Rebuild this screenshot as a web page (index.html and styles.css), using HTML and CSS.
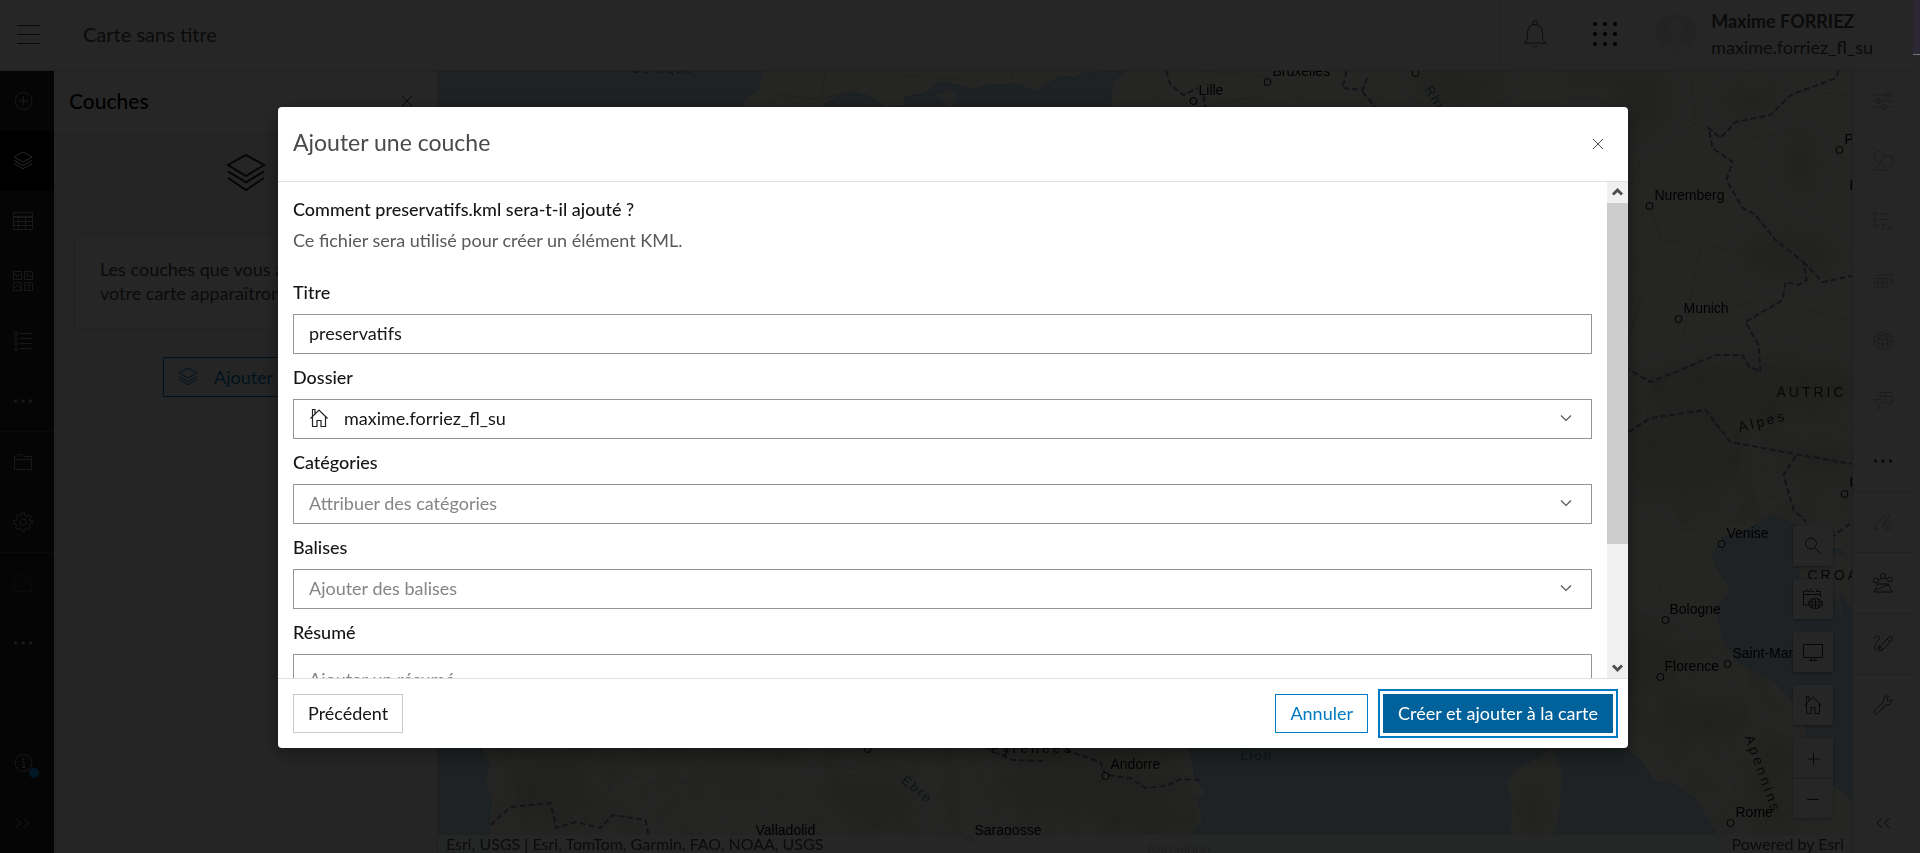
FILE: index.html
```
<!DOCTYPE html>
<html lang="fr">
<head>
<meta charset="utf-8">
<title>Carte sans titre</title>
<meta name="viewport" content="width=device-width, initial-scale=1">
<link rel="stylesheet" href="styles.css">
</head>
<body>
<svg class="sprite" aria-hidden="true">
  <symbol id="i-layers" viewBox="0 0 20 20"><path d="M10 1 L19 6 L10 11.500 L1 6 Z M1 9.200 L10 14.700 L19 9.200 M1 12.500 L10 18.500 L19 12.500"/></symbol>
  <symbol id="i-layers-small" viewBox="0 0 20 20"><path d="M10 1 L19 6 L10 11 L1 6 Z M1 9.500 L10 14.500 L19 9.500 M1 12.700 L10 17.700 L19 12.700"/></symbol>
  <symbol id="i-dots" viewBox="0 0 20 20"><g class="solid"><circle cx="2.500" cy="10" r="1.700"/><circle cx="10" cy="10" r="1.700"/><circle cx="17.500" cy="10" r="1.700"/></g></symbol>
  <symbol id="i-home" viewBox="0 0 20 20"><path d="M1.500 10.500 L10 2 L18.500 10.500 M3.500 9 V18.500 H8 V12.500 H12 V18.500 H16.500 V9 M3.500 8.500 V1.500 H6 V5.500"/></symbol>
  <symbol id="i-close" viewBox="0 0 12 12"><path d="M1 1 L11 11 M11 1 L1 11"/></symbol>
  <symbol id="i-chevron" viewBox="0 0 12 12"><path d="M1 3.500 L6 8.500 L11 3.500"/></symbol>
</svg>
<div class="app">
  <header class="topbar">
    <button class="burger" aria-label="Menu"><span></span><span></span><span></span></button>
    <h1 class="map-title">Carte sans titre</h1>
    <div class="account">
      <button class="bell" aria-label="Notifications"><svg width="24" height="28" viewBox="0 0 24 28"><path d="M1 23 H23 C20 21 19.500 19 19.500 14 C19.500 8 17 4.500 12 4.500 C7 4.500 4.500 8 4.500 14 C4.500 19 4 21 1 23 Z M10 4.500 V2.500 A2 2 0 0 1 14 2.500 V4.500 M9.500 25 C10 27.500 14 27.500 14.500 25"/></svg></button>
      <button class="apps" aria-label="Applications"><svg class="solid" width="26" height="26" viewBox="0 0 26 26"><circle cx="3" cy="3" r="2"/><circle cx="13" cy="3" r="2"/><circle cx="23" cy="3" r="2"/><circle cx="3" cy="13" r="2"/><circle cx="13" cy="13" r="2"/><circle cx="23" cy="13" r="2"/><circle cx="3" cy="23" r="2"/><circle cx="13" cy="23" r="2"/><circle cx="23" cy="23" r="2"/></svg></button>
      <svg class="avatar" width="40" height="40" viewBox="0 0 40 40"><circle cx="20" cy="20" r="20" fill="#e6e6e6"/><path d="M20 4 C13 4 12 11 14 17 C15 21 17 23 17 26 C12 28 8 30 7 35 A20 20 0 0 0 33 35 C32 30 28 28 23 26 C23 23 25 21 26 17 C28 11 27 4 20 4Z" fill="#f3f3f3"/></svg>
      <div class="who"><strong>Maxime FORRIEZ</strong><span>maxime.forriez_fl_su</span></div>
    </div>
  </header>
  <div class="workspace">
    <nav class="rail rail-dark" aria-label="Contenu">
      <button aria-label="Ajouter"><svg class="ic" viewBox="0 0 20 20"><circle cx="10.500" cy="10" r="8.500"/><path d="M10.500 5.500 V14.500 M6 10 H15"/></svg></button>
      <button class="active" aria-label="Couches"><svg class="ic"><use href="#i-layers-small"/></svg></button>
      <button aria-label="Tables"><svg class="ic" viewBox="0 0 20 20"><path d="M.5 1.500 H19.500 V18.500 H.5 Z M.5 6.500 H19.500 M.5 10.500 H19.500 M.5 14.500 H19.500 M5.500 6.500 V18.500 M12.500 6.500 V18.500 M.5 5.500 H19.500"/></svg></button>
      <button aria-label="Fond de carte"><svg class="ic" viewBox="0 0 20 20"><path d="M.5 .5 H8.500 V8.500 H.5 Z M11.500 .5 H19.500 V8.500 H11.500 Z M.5 11.500 H8.500 V19.500 H.5 Z M11.500 11.500 H19.500 V19.500 H11.500 Z M2 2 L4 6 L7 3 M14 2 L14 5 H18 M2 17 L5 14 L8 17 M13 14 H18 M16 14 V18"/></svg></button>
      <button aria-label="Légende"><svg class="ic" viewBox="0 0 20 20"><path d="M7 2.500 H19 M7 7.500 H19 M7 12.500 H19 M7 17.500 H19"/><path d="M1.500 1 H4.500 V4 H1.500Z M1.500 11 H4.500 V14 H1.500Z M1 19 L3 16 L5 19Z"/><circle cx="3" cy="7.500" r="1.500"/></svg></button>
      <button aria-label="Plus"><svg class="ic"><use href="#i-dots"/></svg></button>
      <hr>
      <button aria-label="Ouvrir"><svg class="ic" viewBox="0 0 20 20"><path d="M1.500 17.500 V4.500 H3 L5 2.500 H9 L10.500 4.500 H18.500 V17.500 Z M1.500 7.500 H18.500"/></svg></button>
      <button aria-label="Paramètres"><svg class="ic" viewBox="0 0 20 20"><circle cx="10" cy="10" r="3.300"/><path d="M8.500 .8 H11.500 L12 3.500 L14 4.400 L16.500 2.900 L18 5 L16.200 7 L16.800 8.500 L19.300 9 V11.500 L16.800 12 L16 13.700 L17.400 16 L15.500 17.500 L13.500 16 L12 16.600 L11.500 19.200 H8.500 L8 16.600 L6.300 16 L4.200 17.400 L2.500 15.500 L4 13.500 L3.300 12 L.7 11.500 V8.700 L3.300 8.300 L4 6.500 L2.500 4.200 L4.500 2.700 L6.500 4.100 L8 3.500 Z"/></svg></button>
      <hr>
      <button class="off" aria-label="Partager"><svg class="ic" viewBox="0 0 20 20"><path d="M12 1.500 H1.500 V18.500 H18.500 V11 M9 14 C9 8 12 5 18 5 M15 1 L19 5 L15 9"/></svg></button>
      <button aria-label="Plus"><svg class="ic"><use href="#i-dots"/></svg></button>
      <span class="push"></span>
      <button class="badge-host" aria-label="Aide"><svg class="ic" viewBox="0 0 20 20"><circle cx="10.500" cy="10" r="8.500"/><path d="M9 8.500 H11 V14 M8.500 14.500 H13 M10 5 V6.500 H11 V5Z"/></svg><i class="badge"></i></button>
      <button aria-label="Développer"><svg class="ic" viewBox="0 0 20 20"><path d="M3 5 L8 10 L3 15 M10.500 5 L15.500 10 L10.500 15"/></svg></button>
    </nav>
    <section class="panel">
      <div class="panel-head"><h2>Couches</h2><button aria-label="Fermer"><svg width="12" height="12"><use href="#i-close"/></svg></button></div>
      <div class="panel-body">
        <svg class="hero" width="40" height="40"><use href="#i-layers"/></svg>
        <p class="hint">Les couches que vous ajoutez à<br>votre carte apparaîtront ici.</p>
        <button class="add-layer"><svg class="ic"><use href="#i-layers-small"/></svg>Ajouter</button>
      </div>
    </section>
    <main class="map">
      <svg class="map-canvas" viewBox="437 71 1415 782" preserveAspectRatio="xMidYMid slice">
        <defs>
          <filter id="soft"><feGaussianBlur stdDeviation="9"/></filter>
          <filter id="relief" x="0" y="0" width="100%" height="100%"><feTurbulence type="fractalNoise" baseFrequency=".05 .03" numOctaves="4" seed="7"/><feColorMatrix values="0 0 0 0 .35  0 0 0 0 .38  0 0 0 0 .25  2.600 0 0 0 -1.150"/></filter>
        </defs>
        <rect class="land" x="437" y="71" width="1415" height="782"/>
        <g class="green" filter="url(#soft)">
          <ellipse cx="1460" cy="85" rx="45" ry="20"/><ellipse cx="1640" cy="100" rx="30" ry="35"/><ellipse cx="1590" cy="75" rx="30" ry="12"/>
          <ellipse cx="1790" cy="255" rx="50" ry="25"/><ellipse cx="1800" cy="165" rx="18" ry="30"/><ellipse cx="1750" cy="100" rx="30" ry="14"/>
          <ellipse cx="1750" cy="390" rx="110" ry="35"/><ellipse cx="1690" cy="450" rx="60" ry="50"/><ellipse cx="1820" cy="460" rx="40" ry="20"/>
          <ellipse cx="1650" cy="660" rx="30" ry="35"/><ellipse cx="1700" cy="720" rx="50" ry="25"/><ellipse cx="1770" cy="790" rx="20" ry="50"/>
          <ellipse cx="550" cy="790" rx="45" ry="40"/><ellipse cx="870" cy="800" rx="45" ry="28"/><ellipse cx="1080" cy="785" rx="90" ry="35"/><ellipse cx="1150" cy="820" rx="50" ry="20"/><ellipse cx="700" cy="752" rx="120" ry="10"/>
        </g>
        <g class="relief">
          <rect x="1628" y="365" width="225" height="160" filter="url(#relief)"/>
          <rect x="1628" y="640" width="190" height="195" filter="url(#relief)"/>
          <rect x="485" y="748" width="710" height="90" filter="url(#relief)"/>
        </g>
        <g class="roads">
          <path d="M1628 190 L1640 160 L1700 120 L1740 80 M1650 205 L1660 240 L1705 245 L1750 255 L1780 275 M1700 245 L1680 350 M1680 282 L1628 260 M1720 310 L1760 300 L1852 320 M1640 300 L1628 340 M1740 140 L1800 130 L1852 165 M1690 71 L1695 120 M1750 71 L1780 90 L1852 95"/>
          <path d="M1650 500 L1680 530 L1720 525 M1628 610 L1700 640 L1790 690 M1660 680 L1690 710 L1720 760 L1740 800 M1655 600 L1670 560 L1700 545 M1760 500 L1852 480"/>
          <path d="M605 800 L615 770 L655 784 L682 783 L660 810 L655 835 M605 800 L625 835 M682 783 L720 750 M682 783 L740 775 L775 835 M810 765 L870 770 L910 810 L945 835 M950 835 L985 810 L1030 835"/>
          <path d="M825 71 L820 100 L780 95 L740 120 M820 100 L900 75 L960 80 M1010 71 L1012 80 M1130 71 L1165 107 M1200 71 L1265 76 L1310 107 M1370 107 L1400 80 L1470 71 M1195 107 L1265 95"/>
        </g>
        <g class="sea">
          <path d="M437 71 H762 L757 90 L749 95 L738 110 H437 Z"/>
          <path d="M822 112 L825 104 L838 96 L855 92 L872 98 L885 107 L903 106 L905 97 L925 93 L940 82 L960 86 L975 89 L988 85 L1015 84 L1035 91 L1060 77 L1075 78 L1082 73 L1124 71 L1112 82 L1110 112 Z"/>
          <path d="M437 748 H480 L489 765 L484 780 L491 800 L488 835 V853 H437 Z"/>
          <path d="M1190 748 L1195 780 L1206 792 L1197 800 L1203 820 L1190 835 L1180 853 H1725 L1716 834 L1695 800 L1675 785 L1655 782 L1640 760 L1615 740 H1190 Z"/>
          <path d="M1712 555 L1722 538 L1742 532 L1765 520 L1770 516 L1795 525 L1812 545 L1840 550 L1852 565 V650 L1852 800 L1822 775 L1808 740 L1800 710 L1775 682 L1738 662 L1722 638 L1716 610 L1730 590 L1718 570 Z"/>
        </g>
        <g class="land"><path d="M935 95 L948 90 L958 95 L950 107 Z"/><path d="M1552 748 L1556 755 L1562 775 L1558 815 L1553 835 H1510 L1512 800 L1506 785 L1515 770 L1540 757 Z"/><path d="M1793 535 L1852 560 V610 L1838 590 L1842 620 L1828 580 L1800 578 Z"/></g>
        <g class="green"><ellipse cx="1532" cy="810" rx="16" ry="28" filter="url(#soft)"/></g>
        <g class="frontier">
          <path d="M1838 71 L1836 78 L1790 95 L1770 115 L1735 122 L1720 138 L1708 128 L1712 148 L1732 162 L1726 180 L1742 208 L1755 215 L1775 240 L1803 262 L1806 280 L1798 285 L1785 282 L1782 300 L1745 322 L1758 345 L1760 372 L1748 366 L1742 355 L1715 355 L1680 370 L1650 382 L1628 369"/>
          <path d="M1803 262 L1822 282 L1852 276 M1628 432 L1650 418 L1705 410 L1730 442 L1800 455 L1852 464 M1795 456 L1783 475 L1793 510 L1806 522 M1830 538 L1852 522"/>
          <path d="M490 825 L510 807 L550 803 L556 828 L575 822 L600 828 L612 815 L645 820 L648 835 M985 748 L1012 760 L1045 761 M1065 750 L1100 762 L1105 775 L1130 778 L1145 788 L1165 786 L1180 779 L1200 780"/>
          <path d="M1166 71 L1170 85 L1183 95 L1197 88 M1203 96 L1205 108 M1346 71 L1342 88 L1362 90 L1368 75 M1362 92 L1375 107"/>
        </g>
        <g class="city-dots"><circle cx="1193" cy="101" r="3.500"/><circle cx="1267" cy="82" r="3.500"/><circle cx="1415" cy="73" r="3.500"/><circle cx="1649" cy="206" r="3.500"/><circle cx="1678" cy="319" r="3.500"/><circle cx="1839" cy="150" r="3.500"/><circle cx="1844" cy="494" r="3.500"/><circle cx="1721" cy="544" r="3.500"/><circle cx="1665" cy="620" r="3.500"/><circle cx="1727" cy="664" r="3.500"/><circle cx="1660" cy="677" r="3.500"/><circle cx="1730" cy="823" r="3.500"/><circle cx="867" cy="749" r="3.500"/><circle cx="1105" cy="776" r="3.500"/><circle cx="969" cy="840" r="3.500"/></g>
        <g class="cities">
          <text x="1198" y="95">Lille</text><text x="1272" y="76">Bruxelles</text><text x="1654" y="200">Nuremberg</text><text x="1683" y="313">Munich</text><text x="1844" y="144">P</text><text x="1849" y="190">L</text><text x="1849" y="487">L</text><text x="1726" y="538">Venise</text><text x="1669" y="614">Bologne</text><text x="1732" y="658">Saint-Marin</text><text x="1664" y="671">Florence</text><text x="1735" y="817">Rome</text><text x="1110" y="769">Andorre</text><text x="755" y="835">Valladolid</text><text x="974" y="835">Saragosse</text><text x="1147" y="855">Barcelone</text>
        </g>
        <g class="regions"><text x="1776" y="397">AUTRIC</text><text x="1807" y="580">CROATIE</text><text x="1739" y="432" transform="rotate(-14 1739 432)">Alpes</text><text x="1744" y="737" transform="rotate(70 1744 737)">Apennins</text><text x="990" y="753">Pyrénées</text></g>
        <g class="waters"><text x="630" y="73">Celtique</text><text x="1240" y="760">Lion</text><text x="900" y="782" transform="rotate(38 900 782)">Èbre</text><text x="1424" y="89" transform="rotate(60 1424 89)">Rhin</text></g>
      </svg>
      <div class="widgets">
        <button aria-label="Rechercher"><svg class="ic" viewBox="0 0 20 20"><circle cx="8" cy="7.500" r="5.500"/><path d="M12 12 L18 18"/></svg></button>
        <button aria-label="Carte temporelle"><svg class="ic" viewBox="0 0 20 20"><path d="M5 16 H.5 V2.500 H3 M5 2.500 H7 M9 2.500 H11 M13 2.500 H17.500 V8 M.5 5.500 H17.500 M4 0 V3 M8 0 V3 M14 0 V3"/><ellipse cx="12.500" cy="14.500" rx="7" ry="5"/><path d="M5.500 13 H19.500 M5.500 16 H19.500 M10 10 C8 13 8 16 10 19 M15 10 C17 13 17 16 15 19 M12.500 10 V19"/></svg></button>
        <button aria-label="Affichage"><svg class="ic" viewBox="0 0 20 20"><path d="M.5 2.500 H19.500 V15.500 H.5 Z M6 18.500 H14 M8.500 16 V18 M11.500 16 V18"/></svg></button>
        <button aria-label="Accueil"><svg class="ic"><use href="#i-home"/></svg></button>
        <div class="zoom"><button aria-label="Zoom avant"><svg class="ic" viewBox="0 0 20 20"><path d="M10.500 5 V17 M4.500 11 H16.500"/></svg></button><button aria-label="Zoom arrière"><svg class="ic" viewBox="0 0 20 20"><path d="M4 10.500 H16"/></svg></button></div>
      </div>
      <footer class="credits"><span>Esri, USGS | Esri, TomTom, Garmin, FAO, NOAA, USGS</span><span>Powered by Esri</span></footer>
    </main>
    <nav class="rail rail-light" aria-label="Outils">
      <button class="off" aria-label="Propriétés"><svg class="ic" viewBox="0 0 20 20"><path d="M1 4 H14 M17 4 H19.500 M14 1.500 H17 V6.500 H14Z M.5 10 H3.500 M6.500 10 H19.500 M3.500 7.500 H6.500 V12.500 H3.500Z M1 16 H10 M13 16 H19.500 M10 13.500 H13 V18.500 H10Z"/></svg></button>
      <button class="off" aria-label="Styles"><svg class="ic" viewBox="0 0 20 20"><path d="M4 10 A5 5 0 1 1 11 6.500 M12 5.500 H19.500 V15 H15 M1 19 L7.500 10 L14 19Z"/></svg></button>
      <button class="off" aria-label="Expression"><svg class="ic" viewBox="0 0 20 20"><path d="M.5 1 H3.500 V4 H.5Z M.5 7 H3.500 V10 H.5Z M.5 13 H3.500 V16 H.5Z M6 2.500 H17 M6 8.500 H15 M5 14.500 H8 M8 19.500 C11 20 10 10 13.500 10 M9 13.500 H13 M14 14 L19 19.500 M19 14 L14 19.500"/></svg></button>
      <button class="off" aria-label="Agrégation"><svg class="ic" viewBox="0 0 20 20"><path d="M1 7.500 H14 V16 H1Z M1 12 H14 M5 7.500 V16 M9.500 7.500 V16 M6 5 V3.500 H19 V13 H16 M10 0 V2 M10 18 V20"/></svg></button>
      <button class="off" aria-label="Cube"><svg class="ic" viewBox="0 0 20 20"><path d="M1 5 L10 1 L19 5 V15 L10 19 L1 15Z M1 5 L10 9 L19 5 M10 9 V19 M5.500 3 L14.500 7 V17 M14.500 3 L5.500 7 V17 M1 10 L10 14 L19 10"/></svg></button>
      <button class="off" aria-label="Filtre"><svg class="ic" viewBox="0 0 20 20"><path d="M7 5 V1.500 H19 V12.500 H11 M7 5.500 H19 M13 1.500 V12.500 M.5 8.500 H10.500 L6.500 13 V17 L4.500 18.500 V13Z"/></svg></button>
      <button aria-label="Plus"><svg class="ic"><use href="#i-dots"/></svg></button>
      <hr>
      <button class="off" aria-label="Modifier"><svg class="ic" viewBox="0 0 20 20"><path d="M1.500 18 L3 13 L14 1.500 L17 4 L8 14 M1.500 18 L6 16.500"/><circle cx="14.500" cy="14" r="4"/><circle cx="14.500" cy="14" r="1"/></svg></button>
      <hr>
      <button aria-label="Collaborer"><svg class="ic" viewBox="0 0 20 20"><circle cx="3" cy="7.500" r="2.500"/><circle cx="10" cy="3" r="2.500"/><circle cx="17" cy="6.500" r="2.500"/><path d="M4.500 11 H15.500 L19 19 H1Z M3 17 C8 16 10 12 15.500 12 M5.500 8 L8 5 M12 5 L14.500 6"/></svg></button>
      <hr>
      <button aria-label="Croquis"><svg class="ic" viewBox="0 0 20 20"><path d="M.5 5 C4 0 8 2 5.500 6 C3 10 0 15 2.500 16 C5 16 5 13 7 11 M6 17 L7 12.500 L16 3 C17.500 1.500 20.500 4 19 6 L10 15.500 Z M14 5 L17 8 M7 12.500 L10 15.500"/></svg></button>
      <hr>
      <button aria-label="Outils"><svg class="ic" viewBox="0 0 20 20"><path d="M18.500 4.500 L15.500 6.500 L13.500 4.500 L15.500 1 C12 0 9.500 3.500 10.800 6.500 L1.500 15.500 C-.5 17.500 2.500 20.500 4.500 18.500 L13.500 9.500 C17 10.500 20 7.500 18.500 4.500Z"/></svg></button>
      <span class="push"></span>
      <button aria-label="Développer"><svg class="ic" viewBox="0 0 20 20"><path d="M9 5 L4 10 L9 15 M16.500 5 L11.500 10 L16.500 15"/></svg></button>
    </nav>
  </div>

  <div class="scrim">
    <form class="modal" role="dialog" aria-labelledby="dlg-title">
      <header class="modal-head"><h2 id="dlg-title">Ajouter une couche</h2><button type="button" aria-label="Fermer"><svg width="12" height="12"><use href="#i-close"/></svg></button></header>
      <div class="modal-main">
        <div class="modal-body">
          <h3>Comment preservatifs.kml sera-t-il ajouté ?</h3>
          <p>Ce fichier sera utilisé pour créer un élément KML.</p>
          <div class="fields">
            <div class="field"><label for="f-title">Titre</label><input id="f-title" class="control" type="text" value="preservatifs"></div>
            <div class="field"><label for="f-folder">Dossier</label><div class="control"><svg class="ic home"><use href="#i-home"/></svg><select id="f-folder"><option>maxime.forriez_fl_su</option></select><svg class="chev"><use href="#i-chevron"/></svg></div></div>
            <div class="field"><label for="f-cat">Catégories</label><div class="control hollow"><select id="f-cat"><option>Attribuer des catégories</option></select><svg class="chev"><use href="#i-chevron"/></svg></div></div>
            <div class="field"><label for="f-tags">Balises</label><div class="control hollow"><select id="f-tags"><option>Ajouter des balises</option></select><svg class="chev"><use href="#i-chevron"/></svg></div></div>
            <div class="field"><label for="f-sum">Résumé</label><textarea id="f-sum" class="control" placeholder="Ajouter un résumé"></textarea></div>
          </div>
        </div>
        <div class="scrollbar" aria-hidden="true">
          <svg viewBox="0 0 21 21"><path d="M6 12.500 L10.500 8 L15 12.500"/></svg>
          <div class="track"><div class="thumb"></div></div>
          <svg viewBox="0 0 21 21"><path d="M6 8.500 L10.500 13 L15 8.500"/></svg>
        </div>
      </div>
      <footer class="modal-foot">
        <button type="button" class="btn">Précédent</button>
        <span class="push"></span>
        <button type="button" class="btn btn-outline">Annuler</button>
        <button type="button" class="btn btn-primary">Créer et ajouter à la carte</button>
      </footer>
    </form>
  </div>
</div>
<div class="edge"><span></span></div>
</body>
</html>
```
FILE: styles.css
```
* { box-sizing: border-box; }
body { margin: 0; height: 100vh; display: flex; overflow: hidden; background: #262626; font: 18px/24px Lato, "Open Sans", sans-serif; color: #4a4a4a; }
h1, h2, h3, p { margin: 0; font-weight: 400; }
button { font: inherit; color: inherit; background: none; border: 0; padding: 0; display: flex; align-items: center; justify-content: center; }
svg { fill: none; stroke: currentColor; stroke-width: 1; flex: none; }
.sprite { position: absolute; width: 0; height: 0; }
.solid { fill: currentColor; stroke: none; }
.ic { width: 20px; height: 20px; }
.push { flex: 1; }

.app { position: relative; flex: 1; min-width: 0; display: flex; flex-direction: column; background: #fff; }
.edge { width: 7px; background: #262626; }
.edge span { display: block; height: 55px; background: #2b2735; border-bottom: 1px solid #77757c; }

.topbar { height: 71px; flex: none; display: flex; align-items: center; padding-bottom: 2px; border-bottom: 1px solid #d4d4d4; }
.burger { flex-direction: column; gap: 8px; width: 24px; margin: 0 43px 0 16px; }
.burger span { width: 23px; height: 1px; background: #444; }
.map-title { font-size: 20px; flex: 1; }
.account { display: flex; align-items: center; align-self: stretch; border-left: 1px solid #d4d4d4; padding: 0 40px 0 23px; color: #4a4a4a; }
.apps { color: #000; margin: 0 38px 0 45px; }
.avatar { stroke: none; margin-right: 15px; }
.who { display: flex; flex-direction: column; line-height: 26px; }

.workspace { flex: 1; display: flex; min-height: 0; }
.rail { display: flex; flex-direction: column; flex: none; }
.rail button { height: 60px; flex: none; }
.rail hr { width: 100%; height: 1px; border: 0; margin: 0; flex: none; }
.rail-dark { width: 54px; background: #212121; color: #a8a8a8; }
.rail-dark button { padding-right: 8px; position: relative; }
.rail-dark hr { background: #444; }
.rail-dark .active { background: #000; color: #fff; }
.rail-dark .off { color: #484848; }
.badge { position: absolute; left: 29px; top: 35px; width: 10px; height: 10px; border-radius: 50%; background: #009af2; }
.rail-light { width: 61px; border-left: 1px solid #cfcfcf; color: #444; }
.rail-light hr { background: #d4d4d4; }
.rail-light .off { color: #b8b8b8; }

.panel { width: 384px; flex: none; background: #f8f8f8; border-right: 1px solid #dfdfdf; }
.panel-head { height: 64px; display: flex; align-items: center; justify-content: space-between; padding: 0 24px 4px 15px; background: #fff; border-bottom: 1px solid #dfdfdf; }
.panel-head h2 { font-size: 21px; font-weight: 500; color: #000; }
.panel-body { display: flex; flex-direction: column; align-items: center; padding: 18px 20px; }
.hero { color: #222; margin-bottom: 42px; }
.hint { align-self: stretch; border: 1px solid #dfdfdf; background: #fff; padding: 21px 25px 23px; margin-bottom: 28px; }
.add-layer { width: 165px; height: 40px; border: 1px solid #007ac2; color: #007ac2; gap: 16px; justify-content: flex-start; padding-left: 14px; }

.map { flex: 1; min-width: 0; position: relative; display: flex; flex-direction: column; justify-content: flex-end; overflow: hidden; }
.map-canvas { position: absolute; inset: 0; width: 100%; height: 100%; stroke: none; font-family: "Liberation Sans", Arial, sans-serif; }
.land { fill: #f5f3ee; }
.sea path { fill: #c8e4f2; stroke: #a6d0e6; }
.green ellipse { fill: #e2e7d5; }
.relief { opacity: .2; }
.roads path { fill: none; stroke: #dcdcd8; }
.frontier path { fill: none; stroke: #8f7aa8; stroke-width: 2; stroke-dasharray: 6 3; }
.city-dots circle { fill: #f5f3ee; stroke: #000; stroke-width: 1; }
.cities { fill: #000; font-size: 14px; }
.regions { fill: #2a2a2a; font-size: 14px; letter-spacing: 3px; }
.waters { fill: #4a8ba0; font-size: 13px; letter-spacing: 2px; }
.widgets { position: absolute; right: 19px; bottom: 35px; display: flex; flex-direction: column; gap: 13px; color: #333; }
.widgets button { width: 40px; height: 40px; background: #fff; box-shadow: 0 1px 3px #0006; }
.zoom button + button { border-top: 1px solid #ccc; }
.credits { position: relative; display: flex; justify-content: space-between; height: 18px; line-height: 18px; padding: 0 8px; font-size: 16px; background: #ffffffcc; white-space: nowrap; }

.scrim { position: absolute; inset: 0; background: #000000d9; display: flex; align-items: center; justify-content: center; padding: 2px 7px 0 0; }
.modal { width: 1350px; max-width: 94%; height: 641px; max-height: 94%; background: #fff; border-radius: 4px; display: flex; flex-direction: column; overflow: hidden; box-shadow: 0 6px 20px #0006; }
.modal-head { height: 75px; flex: none; display: flex; align-items: center; justify-content: space-between; padding: 0 24px 0 15px; border-bottom: 1px solid #dfdfdf; }
.modal-head h2 { font-size: 23px; line-height: 30px; padding-bottom: 4px; }
.modal-main { flex: 1; min-height: 0; display: flex; }
.modal-body { flex: 1; min-width: 0; overflow: hidden; padding: 15px 15px 0; }
.modal-body h3 { font-size: 18px; font-weight: 500; color: #151515; margin-bottom: 7px; }
.modal-body p { color: #595959; margin-bottom: 28px; }
.fields { display: flex; flex-direction: column; gap: 11px; }
.field { display: flex; flex-direction: column; gap: 10px; }
.field label { font-weight: 500; color: #151515; }
.control { width: 100%; height: 40px; border: 1px solid #949494; background: #fff; color: #151515; display: flex; align-items: center; padding: 0 15px 2px; font: inherit; outline: 0; }
textarea.control { height: 100px; padding-top: 12px; resize: none; }
textarea.control::placeholder { color: #858585; }
select { appearance: none; flex: 1; border: 0; padding: 0; background: none; font: inherit; color: inherit; outline: 0; }
.hollow select { color: #858585; }
.home { margin-right: 15px; color: #222; stroke-width: 1.200; }
.chev { width: 12px; height: 12px; margin-right: 4px; color: #555; stroke-width: 1.200; }
.scrollbar { width: 21px; flex: none; display: flex; flex-direction: column; background: #f0f0f0; color: #505050; }
.scrollbar svg { width: 21px; height: 21px; stroke-width: 3; }
.track { flex: 1; }
.thumb { height: 75%; background: #cdcdcd; }
.modal-foot { height: 70px; flex: none; display: flex; align-items: center; gap: 15px; padding: 0 15px; border-top: 1px solid #dfdfdf; }
.btn { height: 39px; padding: 0 14px 2px; border: 1px solid #cacaca; color: #151515; white-space: nowrap; }
.btn-outline { border-color: #007ac2; color: #007ac2; }
.btn-primary { background: #00619b; border-color: #00619b; color: #fff; outline: 2px solid #007ac2; outline-offset: 3px; }
.modal-foot .push { margin-right: -15px; }
```
